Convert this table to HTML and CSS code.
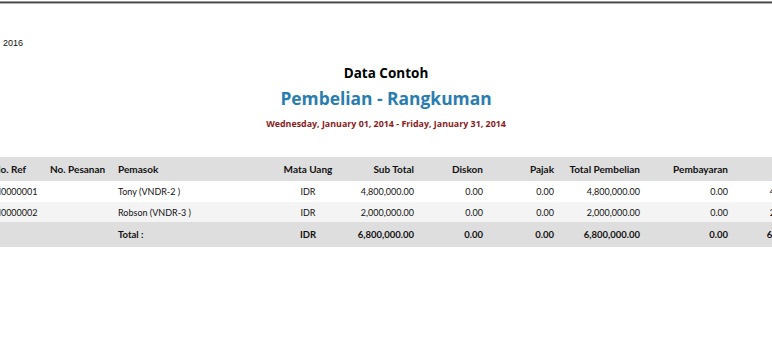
FILE: index.html
```html
<!DOCTYPE html>
<html>
<head>
<meta charset="utf-8">
<link rel="stylesheet" href="styles.css">
</head>
<body>
<div class="topline"></div>
<div class="printdate">2016</div>
<div class="titles">
  <div class="company">Data Contoh</div>
  <div class="report">Pembelian - Rangkuman</div>
  <div class="period">Wednesday, January 01, 2014 - Friday, January 31, 2014</div>
</div>
<table class="grid">
  <colgroup>
    <col class="c1"><col class="c2"><col class="c3"><col class="c4"><col class="c5">
    <col class="c6"><col class="c7"><col class="c8"><col class="c9"><col class="c10">
  </colgroup>
  <thead>
    <tr>
      <th class="l">No. Ref</th>
      <th class="l">No. Pesanan</th>
      <th class="l">Pemasok</th>
      <th class="c">Mata Uang</th>
      <th class="r">Sub Total</th>
      <th class="r">Diskon</th>
      <th class="r">Pajak</th>
      <th class="r">Total Pembelian</th>
      <th class="r">Pembayaran</th>
      <th class="r"></th>
    </tr>
  </thead>
  <tbody>
    <tr class="odd">
      <td class="l">PI0000001</td>
      <td class="l"></td>
      <td class="l">Tony (VNDR-2 )</td>
      <td class="c">IDR</td>
      <td class="r">4,800,000.00</td>
      <td class="r">0.00</td>
      <td class="r">0.00</td>
      <td class="r">4,800,000.00</td>
      <td class="r">0.00</td>
      <td class="r">4,800,000.00</td>
    </tr>
    <tr class="even">
      <td class="l">PI0000002</td>
      <td class="l"></td>
      <td class="l">Robson (VNDR-3 )</td>
      <td class="c">IDR</td>
      <td class="r">2,000,000.00</td>
      <td class="r">0.00</td>
      <td class="r">0.00</td>
      <td class="r">2,000,000.00</td>
      <td class="r">0.00</td>
      <td class="r">2,000,000.00</td>
    </tr>
  </tbody>
  <tfoot>
    <tr>
      <td class="l"></td>
      <td class="l"></td>
      <td class="l">Total :</td>
      <td class="c">IDR</td>
      <td class="r">6,800,000.00</td>
      <td class="r">0.00</td>
      <td class="r">0.00</td>
      <td class="r">6,800,000.00</td>
      <td class="r">0.00</td>
      <td class="r">6,800,000.00</td>
    </tr>
  </tfoot>
</table>
</body>
</html>
```
FILE: styles.css
```css
html, body {
  margin: 0;
  padding: 0;
  background: #ffffff;
  overflow: hidden;
}
body {
  width: 772px;
  height: 350px;
  font-family: "Open Sans", "Noto Sans", sans-serif;
  color: #000;
}
.topline {
  margin-top: 1px;
  height: 1px;
  background: #4a4a4a;
  border-top: 1px solid #9a9a9a;
  border-bottom: 1px solid #b0b0b0;
}
.printdate {
  font-family: "Liberation Sans", Arial, sans-serif;
  font-size: 9px;
  margin-top: 34px;
  padding-left: 3px;
  line-height: 11px;
  color: #111;
}
.titles {
  text-align: center;
  margin-top: 15px;
}
.company {
  font-weight: 700;
  font-size: 13.5px;
  line-height: 18px;
  color: #000;
}
.report {
  font-weight: 700;
  font-size: 17.4px;
  line-height: 24px;
  margin-top: 4px;
  color: #2a7db0;
}
.period {
  font-weight: 700;
  font-size: 8.9px;
  line-height: 13px;
  margin-top: 7px;
  color: #8b1a1a;
}
.grid {
  border-collapse: collapse;
  table-layout: fixed;
  width: 840px;
  margin-left: -12px;
  margin-top: 27px;
  font-family: "Lato", "Open Sans", sans-serif;
  font-size: 9px;
  color: #111;
}
.c1 { width: 57px; }
.c2 { width: 68px; }
.c3 { width: 157px; }
.c4 { width: 76px; }
.c5 { width: 73px; }
.c6 { width: 69px; }
.c7 { width: 71px; }
.c8 { width: 86px; }
.c9 { width: 88px; }
.c10 { width: 95px; }
.grid th, .grid td {
  padding: 0 5px;
  white-space: nowrap;
  overflow: hidden;
}
.grid th {
  height: 24px;
  background: #dedede;
  font-weight: 700;
  font-size: 10px;
}
.grid tbody td {
  height: 21px;
}
.grid tbody tr.even td {
  height: 20px;
  background: #f4f4f4;
}
.grid tfoot td {
  height: 25px;
  background: #dedede;
  font-weight: 700;
  font-size: 9.5px;
}
.l { text-align: left; }
.c { text-align: center; }
.r { text-align: right; }
```
